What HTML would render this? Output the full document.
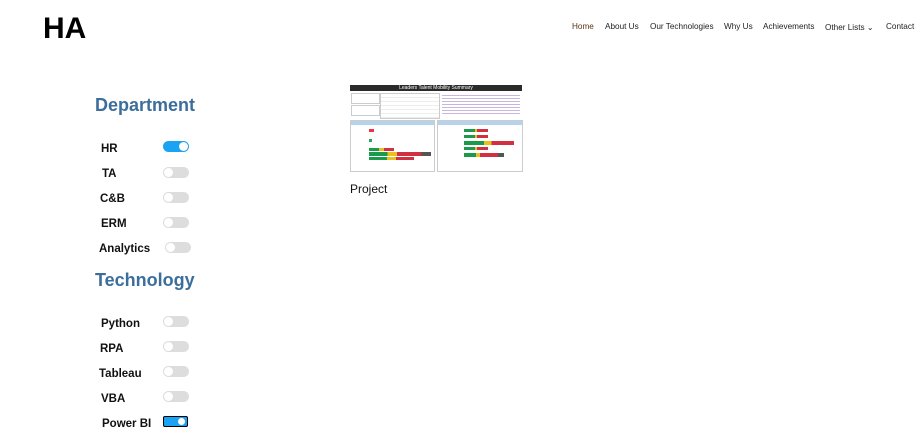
<!DOCTYPE html>
<html><head><style>
body{margin:0;width:916px;height:444px;background:#fff;font-family:"Liberation Sans",Arial,sans-serif;position:relative;overflow:hidden}
.abs{position:absolute}
.logo{left:43px;top:12px;font-size:30px;font-weight:bold;color:#000}
.nav{top:22px;font-size:8.2px;color:#222;white-space:nowrap}
h2{position:absolute;margin:0;font-size:18px;font-weight:bold;color:#3c6e9c}
.lbl{position:absolute;font-size:11.5px;font-weight:bold;color:#111}
.tg{position:absolute;left:163px;width:26px;height:11px;border-radius:6px;background:#ddd}
.tg::after{content:"";position:absolute;left:1px;top:1px;width:9px;height:9px;border-radius:50%;background:#fff}
.on{background:#1aa3f2}
.on::after{left:16px}
.pb{border:1px solid #000;width:23px;height:9px;border-radius:2px}
.pb::after{left:14px;top:1px;width:7px;height:7px}
</style></head><body>
<div class="abs logo">HA</div>
<div class="abs nav" style="left:572px;color:#5a3510">Home</div>
<div class="abs nav" style="left:605px">About Us</div>
<div class="abs nav" style="left:650px">Our Technologies</div>
<div class="abs nav" style="left:724px">Why Us</div>
<div class="abs nav" style="left:763px">Achievements</div>
<div class="abs nav" style="left:825px">Other Lists &#8964;</div>
<div class="abs nav" style="left:886px">Contact</div>

<h2 style="left:95px;top:95px">Department</h2>
<div class="lbl" style="left:101px;top:143px">HR</div><div class="tg on" style="top:141px"></div>
<div class="lbl" style="left:102px;top:168px">TA</div><div class="tg" style="top:167px"></div>
<div class="lbl" style="left:100px;top:193px">C&amp;B</div><div class="tg" style="top:192px"></div>
<div class="lbl" style="left:101px;top:218px">ERM</div><div class="tg" style="top:217px"></div>
<div class="lbl" style="left:99px;top:243px">Analytics</div><div class="tg" style="left:165px;top:242px"></div>

<h2 style="left:95px;top:270px">Technology</h2>
<div class="lbl" style="left:101px;top:318px">Python</div><div class="tg" style="top:316px"></div>
<div class="lbl" style="left:100px;top:343px">RPA</div><div class="tg" style="top:341px"></div>
<div class="lbl" style="left:99px;top:368px">Tableau</div><div class="tg" style="top:366px"></div>
<div class="lbl" style="left:101px;top:393px">VBA</div><div class="tg" style="top:391px"></div>
<div class="lbl" style="left:102px;top:418px">Power BI</div><div class="tg on pb" style="top:416px"></div>

<div class="abs" style="left:350px;top:85px;width:172px;height:86px;background:#fff">
 <div class="abs" style="left:0;top:0;width:172px;height:6px;background:#2a2a2a;color:#fff;font-size:5px;text-align:center;line-height:6px">Leaders Talent Mobility Summary</div>
 <div class="abs" style="left:1px;top:8px;width:27px;height:9px;border:1px solid #ccc"></div>
 <div class="abs" style="left:1px;top:20px;width:27px;height:9px;border:1px solid #ccc"></div>
 <div class="abs" style="left:30px;top:8px;width:58px;height:24px;border:1px solid #ccc;background:repeating-linear-gradient(#fff 0 3px,#eee 3px 4px)"></div>
 <div class="abs" style="left:92px;top:8px;width:78px;height:22px;background:repeating-linear-gradient(#fff 0 2px,#c9b6e0 2px 3px)"></div>
 <div class="abs" style="left:0;top:35px;width:83px;height:50px;border:1px solid #ccc"><div style="height:4px;background:#b6d3ee"></div>
  <div class="abs" style="left:18px;top:8px;width:5px;height:3px;background:#e34"></div>
  <div class="abs" style="left:18px;top:18px;width:3px;height:3px;background:#2a5"></div>
  <div class="abs" style="left:18px;top:27px;width:25px;height:3px;background:linear-gradient(90deg,#1a9a4a 40%,#e8c020 40% 60%,#d03040 60%)"></div>
  <div class="abs" style="left:18px;top:31px;width:62px;height:4px;background:linear-gradient(90deg,#1a9a4a 30%,#e8c020 30% 45%,#d03040 45% 85%,#555 85%)"></div>
  <div class="abs" style="left:18px;top:36px;width:45px;height:3px;background:linear-gradient(90deg,#1a9a4a 40%,#e8c020 40% 60%,#d03040 60%)"></div>
 </div>
 <div class="abs" style="left:87px;top:35px;width:84px;height:50px;border:1px solid #ccc"><div style="height:4px;background:#b6d3ee"></div>
  <div class="abs" style="left:26px;top:8px;width:24px;height:3px;background:linear-gradient(90deg,#1a9a4a 45%,#e8c020 45% 55%,#d03040 55%)"></div>
  <div class="abs" style="left:26px;top:14px;width:24px;height:3px;background:linear-gradient(90deg,#1a9a4a 45%,#e8c020 45% 55%,#d03040 55%)"></div>
  <div class="abs" style="left:26px;top:20px;width:50px;height:4px;background:linear-gradient(90deg,#1a9a4a 40%,#e8c020 40% 55%,#d03040 55%)"></div>
  <div class="abs" style="left:26px;top:26px;width:24px;height:3px;background:linear-gradient(90deg,#1a9a4a 45%,#e8c020 45% 55%,#d03040 55%)"></div>
  <div class="abs" style="left:26px;top:32px;width:40px;height:4px;background:linear-gradient(90deg,#1a9a4a 30%,#e8c020 30% 40%,#d03040 40% 85%,#555 85%)"></div>
 </div>
</div>
<div class="abs" style="left:350px;top:182px;font-size:12px;color:#111">Project</div>
</body></html>
